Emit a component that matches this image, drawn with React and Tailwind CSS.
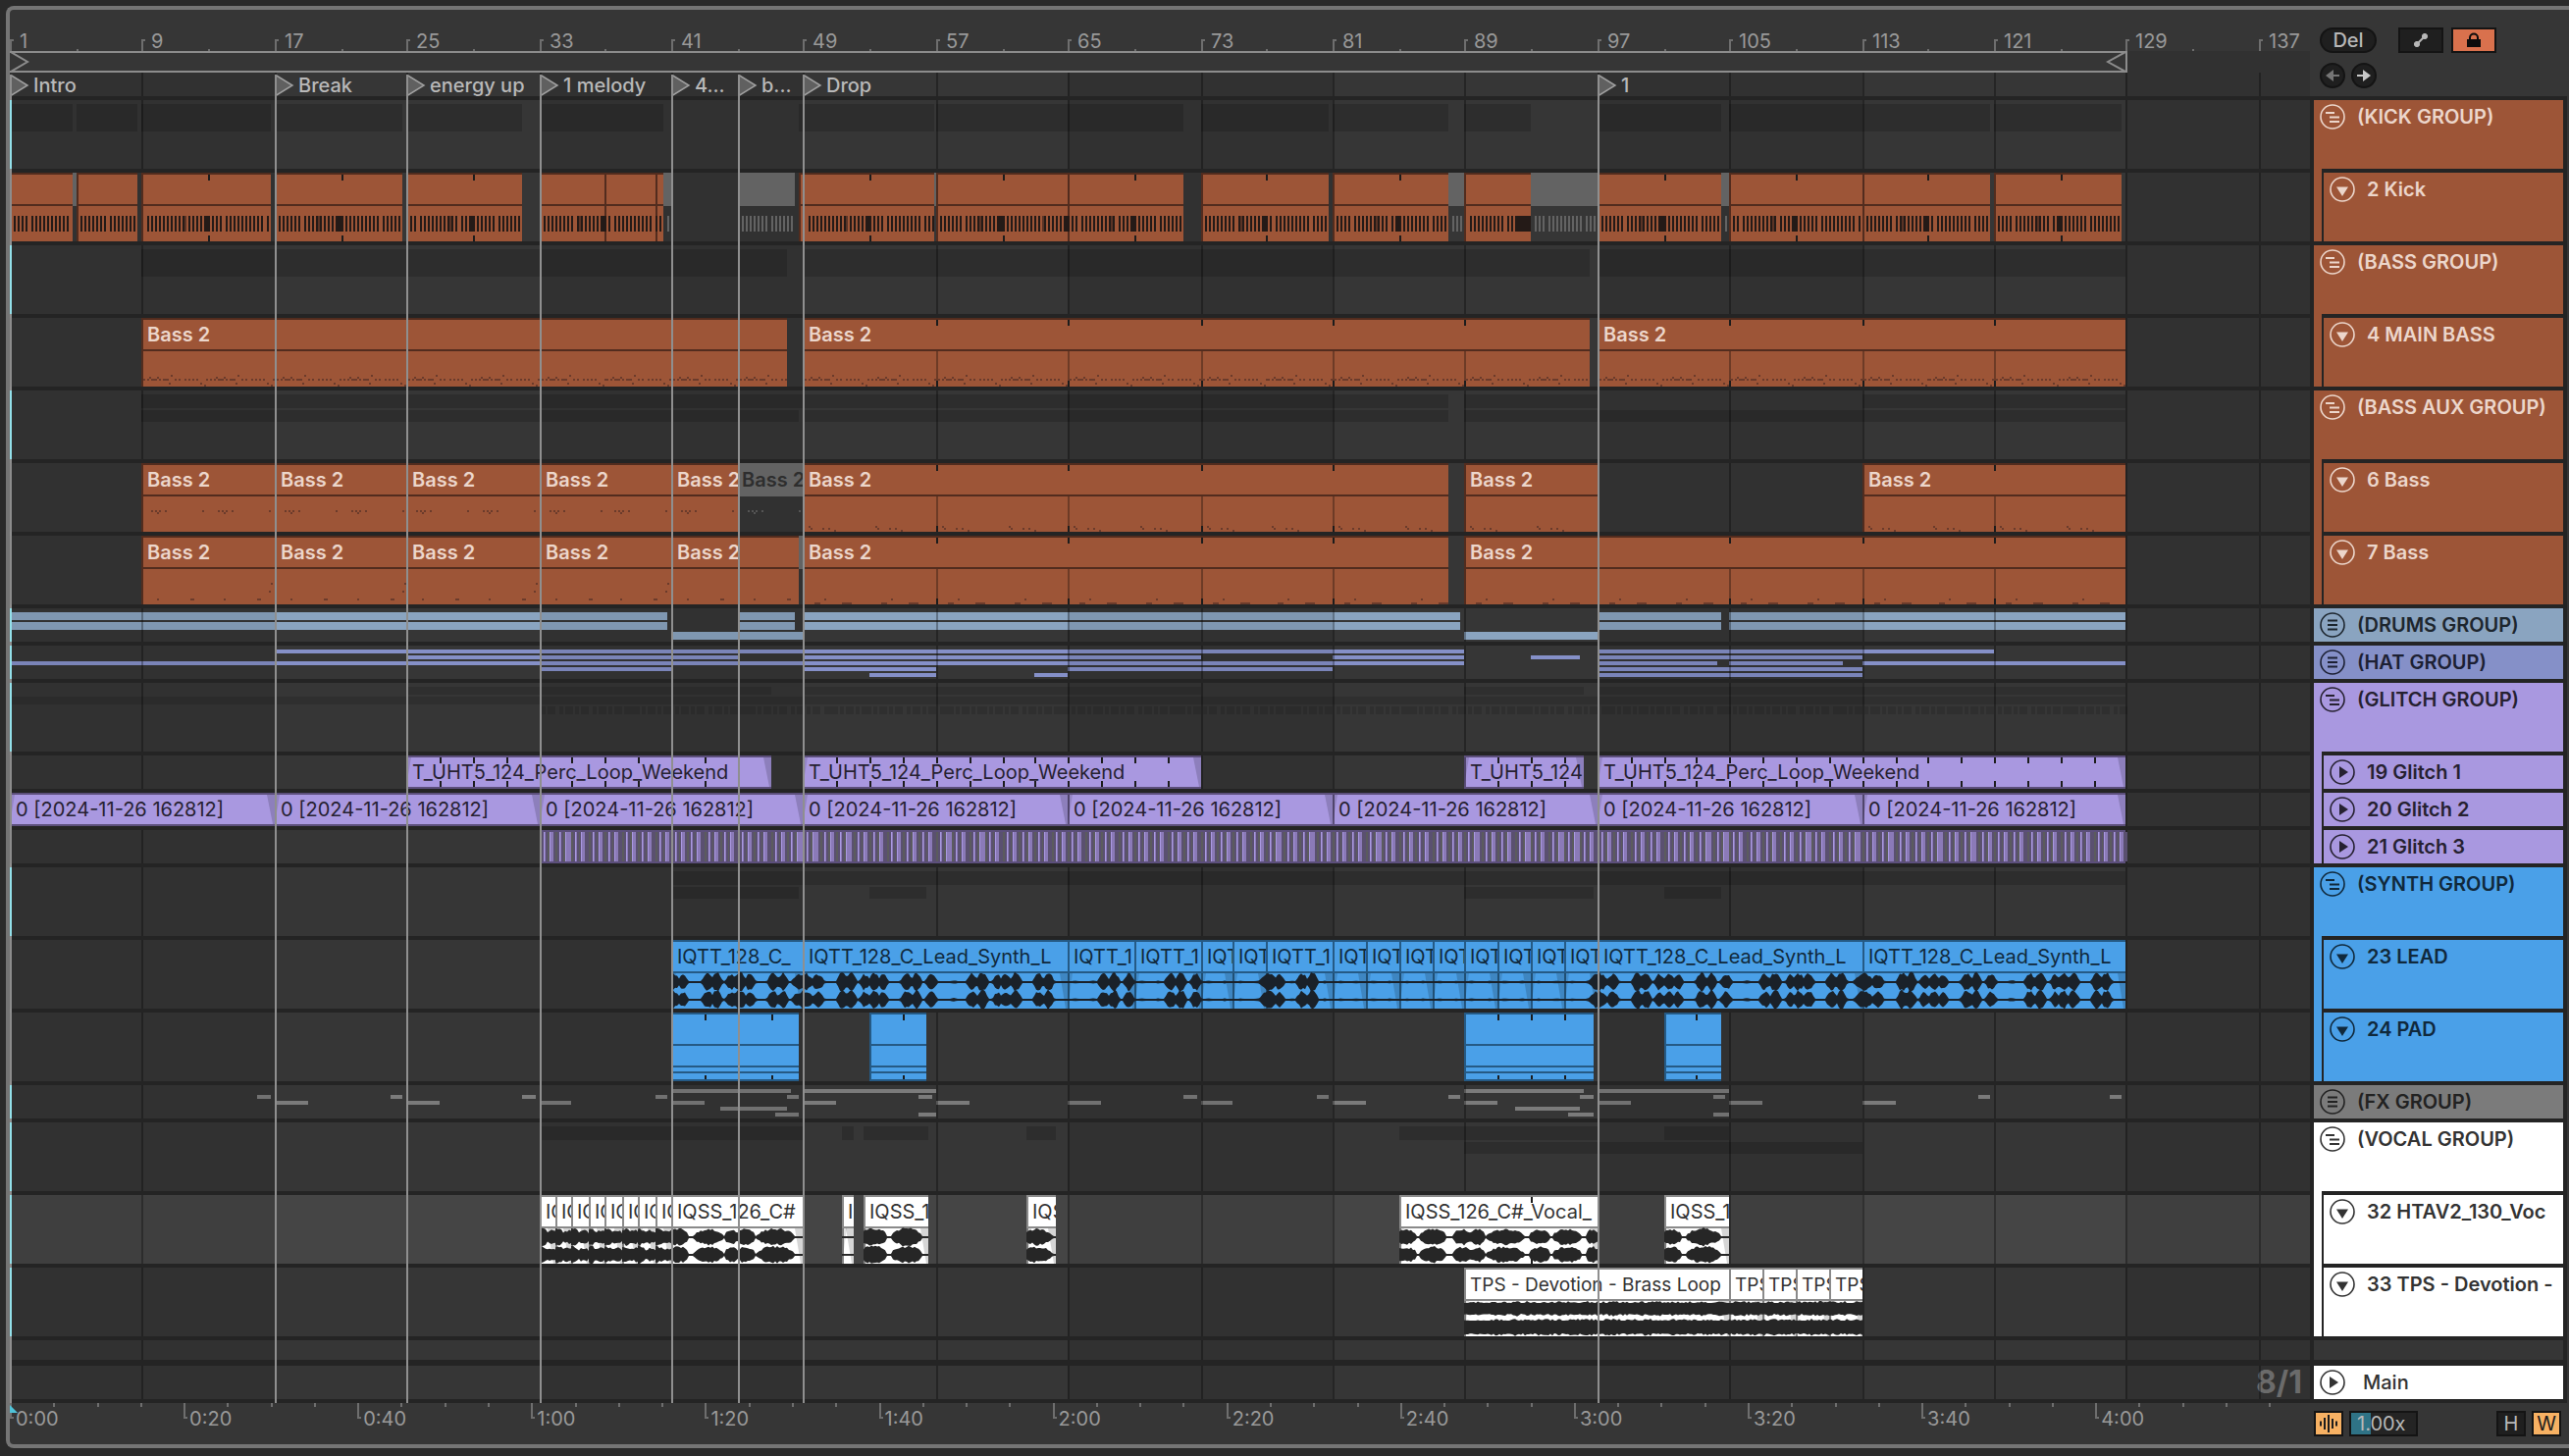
import { Fragment } from "react";

/* ---------- time axis ---------- */
const BARS = 139.1;
const VIEW = 2344;
const BAR_PX = VIEW / BARS;
const px = (bar) => 2 * Math.round(((bar - 1) * BAR_PX) / 2);
const pct = (bar) => `${(px(bar) / VIEW) * 100}%`;
const span = (a, b) => ({ left: pct(a), width: `${((px(b) - px(a)) / VIEW) * 100}%` });
const noise = (n) => {
  const v = Math.sin(n * 127.1 + 11.7) * 43758.5453;
  return v - Math.floor(v);
};
const range = (from, to, step) => {
  const out = [];
  for (let i = from; i < to; i += step) out.push(i);
  return out;
};

const LOCATORS = [
  [1, "Intro"],
  [17, "Break"],
  [25, "energy up"],
  [33, "1 melody"],
  [41, "4..."],
  [45, "b..."],
  [49, "Drop"],
  [97, "1"],
];

/* ---------- themes ---------- */
const THEME = {
  orange: { bg: "bg-[#9d5537]", line: "border-[#522c1e]", text: "text-[#ecd6cb]", title: "font-semibold" },
  steel: { bg: "bg-[#8aa4c0]", line: "border-[#4b5a69]", text: "text-[#1d262e]", title: "" },
  indigo: { bg: "bg-[#8590c8]", line: "border-[#484f6f]", text: "text-[#1c2033]", title: "" },
  purple: { bg: "bg-[#a998e0]", line: "border-[#5c4f7b]", text: "text-[#262131]", title: "" },
  blue: { bg: "bg-[#4aa0e8]", line: "border-[#255a85]", text: "text-[#10293c]", title: "" },
  gray: { bg: "bg-[#7b7b7b]", line: "border-[#444444]", text: "text-[#222222]", title: "" },
  white: { bg: "bg-white", line: "border-[#8a8a8a]", text: "text-[#333333]", title: "" },
  muted: { bg: "", line: "border-transparent", text: "text-[#2e2e2e]", title: "font-semibold" },
};

/* ---------- clip data: [start, end, label, muted] ---------- */
const KICK = [
  [1, 4.8], [4.8, 5, "", 1], [5, 8.72], [9, 16.8], [17, 24.76], [25, 32], [33, 37], [37, 40.1], [40.1, 40.55],
  [40.55, 41, "", 1], [45, 48.5, "", 1], [48.75, 56.85], [56.85, 57, "", 1], [57, 65], [65, 72], [73, 80.8],
  [81, 88], [88, 89, "", 1], [89, 93], [93, 97, "", 1], [97, 104.5], [104.5, 105, "", 1], [105, 113],
  [113, 120.8], [121, 128.76],
];
const KICK_FILLS = [13, 21, 29, 37, 53, 61, 65, 69, 77, 85, 101, 109, 117, 125];
const KICK_TICKS = [13, 21, 29, 53, 61, 69, 77, 85, 101, 109, 117, 125];
const B = "Bass 2";
const MAIN_BASS = [[9, 48, B], [49, 96.55, B], [97, 129, B]];
const BASS6 = [
  [9, 17, B], [17, 25, B], [25, 33, B], [33, 41, B], [41, 45, B], [45, 49, B, 1], [49, 88, B], [89, 97, B], [113, 129, B],
];
const BASS7 = [
  [9, 17, B], [17, 25, B], [25, 33, B], [33, 41, B], [41, 48.7, B], [48.7, 49, "", 1], [49, 88, B], [89, 129, B],
];
const PERC = "T_UHT5_124_Perc_Loop_Weekend";
const GLITCH1 = [[25, 47, PERC], [49, 73, PERC], [89, 96.2, "T_UHT5_124"], [97, 129, PERC]];
const GLITCH2 = range(1, 129, 16).map((s) => [s, s + 16, "0 [2024-11-26 162812]"]);
const SYN = "IQTT_128_C_Lead_Synth_L";
const LEAD = [
  [41, 49, "IQTT_128_C_"], [49, 65, SYN], [65, 69, "IQTT_1"], [69, 73, "IQTT_1"], [73, 75, "IQT"], [75, 77, "IQT"],
  [77, 81, "IQTT_1"], ...range(81, 97, 2).map((s) => [s, s + 2, "IQT"]), [97, 113, SYN], [113, 129, SYN],
];
const PAD = [[41, 48.7], [53, 56.4], [89, 96.8], [101, 104.5]];
const VOCAL = [
  ...range(33, 41, 1).map((s) => [s, s + 1, "IQ"]),
  [41, 49, "IQSS_126_C#"], [51.35, 52.05, "I"], [52.65, 56.6, "IQSS_1"], [62.5, 64.3, "IQS"],
  [85.05, 97, "IQSS_126_C#_Vocal_"], [101, 105, "IQSS_1"],
];
const BRASS = [[89, 105, "TPS - Devotion - Brass Loop"], ...range(105, 113, 2).map((s) => [s, s + 2, "TPS"])];

/* ---------- lane artwork ---------- */
function Art({ h, children }) {
  return (
    <svg
      className="absolute inset-0 h-full w-full"
      viewBox={`0 0 ${VIEW} ${h}`}
      preserveAspectRatio="none"
      aria-hidden="true"
    >
      {children}
    </svg>
  );
}

const boxes = (list) => list.map(([x, y, w, h]) => `M${x} ${y}h${w}v${h}h${-w}z`).join("");

function KickNotes() {
  const live = [];
  const off = [];
  KICK.forEach(([a, b, , muted]) => {
    for (let k = Math.ceil((a - 1) * 4 + 0.01); k < (b - 1) * 4 - 0.2; k++) {
      (muted ? off : live).push([2 * Math.round((k * BAR_PX) / 8), 44, 2, 16]);
    }
  });
  KICK_FILLS.forEach((f) => live.push([px(f) - 4, 44, 6, 16]));
  live.push([px(93) - 16, 44, 16, 16]);
  const soft = KICK_FILLS.map((f) => [px(f) - 26, 44, 4, 16]);
  return (
    <Art h={70}>
      <path d={boxes(off)} fill="#636363" shapeRendering="crispEdges" />
      <path d={boxes(soft)} fill="#5a3325" shapeRendering="crispEdges" />
      <path d={boxes(live)} fill="#241a17" shapeRendering="crispEdges" />
    </Art>
  );
}

/* Repeats a four-bar figure of [dx, y, w] notes inside every clip. */
function Notes({ clips, figure, w = 2 }) {
  const live = [];
  const off = [];
  clips.forEach(([a, b, , muted]) => {
    for (let s = a; s < b; s += 4) {
      figure(a, s).forEach(([dx, y, nw = w]) => {
        const x = px(s) + dx;
        if (x + nw <= px(b)) (muted ? off : live).push([x, y, nw, 2]);
      });
    }
  });
  return (
    <Art h={70}>
      <path d={boxes(off)} fill="#555555" shapeRendering="crispEdges" />
      <path d={boxes(live)} fill="#6b3b2b" shapeRendering="crispEdges" />
    </Art>
  );
}

const mainFigure = () => [
  [2, 62], [6, 62], [8, 60], [10, 62], [14, 62], [16, 60], [18, 62], [22, 62], [26, 62], [30, 58], [28, 66],
  [34, 62], [38, 62], [44, 62], [48, 62], [52, 62], [56, 62], [60, 66], [64, 68], [66, 62], [12, 62], [24, 62],
];
const bass6Figure = (a) =>
  a < 49 ? [[10, 48], [14, 48], [16, 50], [18, 48], [24, 48], [62, 48]] : [[6, 64], [8, 66], [20, 66], [26, 66], [32, 68]];
const bass7Figure = (a, s) =>
  a < 49
    ? [[16, 64], [50, 64, 4], ...((s - a) % 8 === 4 ? [[64, 48], [62, 56]] : [])]
    : [[12, 68, 6], [22, 64], [40, 68, 10]];

function wave(segments, from, to, mid, seed, floor = 1) {
  const x0 = px(from);
  const x1 = px(to);
  const top = [];
  const bottom = [];
  for (let x = x0; x <= x1; x += 2) {
    let a = floor;
    segments.forEach(([s, e, amp, tight]) => {
      if (x >= s && x <= e) {
        const t = (x - s) / Math.max(1, e - s);
        const env = Math.pow(Math.sin(Math.PI * Math.min(1, Math.max(0, t))), tight || 1);
        a = Math.max(a, amp * env * (0.7 + 0.3 * noise(x + seed)));
      }
    });
    top.push(`${x} ${(mid - a).toFixed(1)}`);
    bottom.unshift(`${x} ${(mid + a * (0.85 + 0.15 * noise(x * 3 + seed))).toFixed(1)}`);
  }
  return `M${top.join("L")}L${bottom.join("L")}Z`;
}

const FULL8 = [[-10, 13, 10], [8, 23, 9], [34, 47, 11], [43, 56, 11], [57, 69, 9], [66, 80, 10], [76, 88, 9], [99, 113, 11], [110, 122, 11], [124, 138, 9]];
const HALF8 = [[12, 24, 2], [30, 43, 10], [40, 54, 11], [57, 68, 9], [64, 78, 10], [74, 88, 11], [98, 111, 10], [108, 121, 11]];
const QUARTER = [[30, 44, 10], [41, 54, 11], [56, 69, 10]];
const LEAD_BLOBS = {
  41: [[-10, 11, 11], [6, 18, 9], [30, 45, 10], [40, 53, 11], [54, 69, 9], [62, 78, 11], [74, 87, 10], [97, 111, 10], [108, 120, 11], [122, 138, 9]],
  49: FULL8, 57: HALF8, 97: FULL8, 105: HALF8, 113: FULL8, 121: HALF8,
  65: QUARTER,
  69: QUARTER,
  77: [[-8, 13, 10], [8, 20, 9], [30, 44, 10], [41, 54, 11]],
};

function Fades({ clips, h, top, w = 8 }) {
  return clips.map(([a, b]) => (
    <Fragment key={a}>
      <path d={`M${px(b) - w} ${top}H${px(b)}V${h}h-2z`} fill="#000000" opacity="0.16" />
      <path d={`M${px(a)} ${top}h5L${px(a)} ${h}z`} fill="#000000" opacity="0.12" />
    </Fragment>
  ));
}

function LeadWave() {
  const segs = Object.entries(LEAD_BLOBS).flatMap(([bar, list]) =>
    list.map(([s, e, amp]) => [px(Number(bar)) + s, px(Number(bar)) + e, amp]),
  );
  const quiet = range(65, 97, 1).map((b) => [px(b) + 4, px(b) + 12, 2]);
  return (
    <Art h={70}>
      <Fades clips={LEAD} h={70} top={34} />
      <path d={wave(quiet, 65, 97, 43, 3)} fill="#255a85" />
      <path d={wave(quiet, 65, 97, 61, 3)} fill="#255a85" />
      <path d={wave(segs, 41, 129, 43, 1)} fill="#1a2129" />
      <path d={wave(segs, 41, 129, 61, 5)} fill="#1a2129" />
    </Art>
  );
}

const VOCAL_BLOBS = {
  41: [[-6, 18, 10, 0.4], [23, 53, 9, 0.4], [54, 68, 9, 0.4], [66, 86, 9, 0.4], [87, 126, 10, 0.5]],
  51.35: [],
  52.65: [[-4, 24, 10, 0.4], [28, 60, 10, 0.4]],
  62.5: [[-6, 27, 9, 0.5]],
  85.05: [[-4, 18, 9, 0.4], [20, 48, 9, 0.4], [54, 74, 9, 0.4], [72, 88, 9, 0.4], [88, 128, 9, 0.5], [132, 154, 9, 0.4], [156, 186, 9, 0.4], [190, 204, 9, 0.4]],
  101: [[-4, 18, 9, 0.4], [22, 58, 10, 0.5]],
};

function VocalWave() {
  return (
    <Art h={70}>
      <Fades clips={VOCAL} h={70} top={34} />
      {VOCAL.map(([a, b]) => {
        const segs = (VOCAL_BLOBS[a] || [[-6, 9, 10, 0.3], [7, 19, 8, 0.3]]).map(([s, e, amp, t]) => [px(a) + s, px(a) + e, amp, t]);
        return (
          <Fragment key={a}>
            <path d={wave(segs, a, b, 43, 2)} fill="#262626" />
            <path d={wave(segs, a, b, 61, 7)} fill="#262626" />
          </Fragment>
        );
      })}
    </Art>
  );
}

function BrassWave() {
  return (
    <Art h={70}>
      <Fades clips={BRASS} h={70} top={34} />
      {BRASS.map(([a, b]) => {
        const upper = [[px(a) - 3, px(b) + 3, 8, 0.04]];
        const lower = [[px(a) - 3, px(b) + 3, 9, 0.04]];
        return (
          <Fragment key={a}>
            <path d={wave(upper, a, b, 42, 4, 6)} fill="#262626" />
            <path d={wave(lower, a, b, 61, 9, 7)} fill="#262626" />
          </Fragment>
        );
      })}
    </Art>
  );
}

function GlitchFades({ clips }) {
  return (
    <Art h={34}>
      <Fades clips={clips} h={32} top={2} />
    </Art>
  );
}

function Slices() {
  const dark = [];
  const grayish = [];
  const mid = [];
  const light = [];
  range(33, 129, 1).forEach((b) => {
    const x = px(b);
    const r = noise(b);
    dark.push([x, 2, 18, 30]);
    grayish.push([x, 2, 2, 30]);
    grayish.push([x + 8, 2, r > 0.5 ? 2 : 1, 30]);
    mid.push([x + 4, 2, 2, 30]);
    light.push([x + 4, 2, 1, 30]);
    mid.push([x + 10, 2, r > 0.75 ? 6 : 4, 30]);
    light.push([x + 10, 2, 1, 30]);
  });
  return (
    <Art h={34}>
      <path d={boxes([[px(33), 0, px(129) - px(33), 34]])} fill="#5c4f7b" />
      <path d={boxes(dark)} fill="#5a5070" shapeRendering="crispEdges" />
      <path d={boxes(grayish)} fill="#5b5b5e" shapeRendering="crispEdges" />
      <path d={boxes(mid)} fill="#8b7ab8" shapeRendering="crispEdges" />
      <path d={boxes(light)} fill="#a998e0" shapeRendering="crispEdges" />
    </Art>
  );
}

/* ---------- overviews shown on group lanes: [y, height, [[start, end], ...]] ---------- */
const DARK = "rgba(0,0,0,0.15)";
const every8 = (from, to, len) => range(from, to, 8).map((b) => [b, b + len]);
const OVERVIEW = {
  kick: [[4, 28, [[1, 4.8], [5, 8.72], [9, 16.8], [17, 24.76], [25, 32], [33, 40.55], [48.75, 56.85], [57, 72], [73, 80.8], [81, 88], [89, 93], [97, 104.5], [105, 120.8], [121, 128.76]]]],
  bass: [[4, 28, [[9, 48], [49, 96.55], [97, 129]]]],
  aux: [[4, 14, [[9, 88], [89, 97], [113, 129]]], [20, 12, [[9, 48.7], [49, 88], [89, 129]]]],
  drums: [
    [4, 8, [[1, 40.8], [45, 48.5], [49, 88.7], [97, 104.5], [105, 129]]],
    [14, 8, [[1, 40.8], [45, 48.5], [49, 88.7], [97, 104.5], [105, 129]]],
    [24, 8, [[41, 49], [89, 97]]],
  ],
  hat: [
    [4, 4, [[17, 89], [97, 121]]],
    [10, 4, [[25, 45], [49, 73], [81, 89], [93, 96], [97, 113]]],
    [16, 4, [[1, 89], [97, 104.2], [105, 111.9], [113, 129]]],
    [22, 4, [[33, 41], [49, 57], [65, 81], [97, 113]]],
    [28, 4, [[53, 57], [63, 65], [97, 113]]],
  ],
  glitch: [
    [4, 8, [[25, 47], [49, 73], [89, 96.2], [97, 129]]],
    [14, 8, [[1, 129]]],
    [24, 8, range(33, 129, 1).flatMap((b) => [[b + 0.2, b + 0.45], [b + 0.55, b + 1.05]])],
  ],
  synth: [[4, 14, [[41, 129]]], [20, 12, [[41, 48.7], [53, 56.4], [89, 96.8], [101, 104.5]]]],
  fx: [
    [4, 4, [[41, 48.2], [49, 57], [89, 96.2], [97, 105]]],
    [10, 4, [...every8(16, 64, 0.75), ...every8(72, 112, 0.75), ...every8(120, 129, 0.75)]],
    [16, 4, every8(17, 114, 2)],
    [22, 4, [[44, 48], [92.05, 96]]],
    [28, 4, [[47.3, 48.7], [56, 57], [95.25, 96.8], [104, 105]]],
  ],
  vocal: [[4, 14, [[33, 49], [51.35, 52.05], [52.65, 56.6], [62.5, 64.3], [85.05, 97], [101, 105]]], [20, 12, [[89, 113]]]],
};

function Overview({ rows, color, h }) {
  return (
    <Art h={h}>
      {rows.map(([y, height, list]) => (
        <path
          key={y}
          d={boxes(list.map(([a, b]) => [px(a), y, px(b) - px(a), height]))}
          fill={color}
          shapeRendering="crispEdges"
        />
      ))}
    </Art>
  );
}

/* ---------- lane building blocks ---------- */
function GridShade() {
  return (
    <div className="pointer-events-none absolute inset-0 overflow-hidden">
      {range(1, 139, 32).map((b) => (
        <div key={b} className="absolute inset-y-0 bg-black/8" style={span(b, Math.min(b + 16, BARS + 1))} />
      ))}
      {range(9, 139, 8).map((b) => (
        <div key={b} className="absolute inset-y-0 w-0.5 bg-black/30" style={{ left: pct(b) }} />
      ))}
    </div>
  );
}

function Clip({ clip, theme, flat, ticks = [], bodyLines, compact }) {
  const [a, b, label, muted] = clip;
  const t = muted ? THEME.muted : THEME[theme];
  const inner = ticks.filter((x) => x > a && x < b);
  const at = (x) => ({ left: `${((px(x) - px(a)) / (px(b) - px(a))) * 100}%` });
  return (
    <div className={`absolute inset-y-0 overflow-hidden ${t.bg}`} style={span(a, b)}>
      <div
        className={`flex h-[34px] items-center overflow-hidden border-y-2 pl-1 leading-none whitespace-nowrap ${compact ? "text-[19px]" : "text-[20px]"} ${t.line} ${t.text} ${t.title} ${muted ? "bg-[#636363]" : "border-l-2"}`}
      >
        {label}
      </div>
      {!flat && !muted && <div className={`h-9 border-l-2 ${t.line}`} />}
      {inner.map((x) => (
        <Fragment key={x}>
          {bodyLines && <div className="absolute top-[34px] bottom-0 w-0.5 bg-black/30" style={at(x)} />}
          <div className="absolute top-0.5 h-1.5 w-0.5 bg-[#1c1c1c]" style={at(x)} />
          <div className={`absolute h-1.5 w-0.5 bg-[#1c1c1c] ${flat ? "bottom-0.5" : "bottom-0"}`} style={at(x)} />
        </Fragment>
      ))}
    </div>
  );
}

function Clips({ clips, ...rest }) {
  return clips.map((c) => <Clip key={c[0]} clip={c} {...rest} />);
}

function Lane({ tall, armed, lit, over, children }) {
  return (
    <div className={`relative shrink-0 overflow-hidden ${tall ? "h-[70px]" : "h-[34px]"} ${lit ? "bg-[#454545]" : "bg-[#363636]"}`}>
      {!over && <GridShade />}
      {children}
      {over && <GridShade />}
      <div className={`absolute inset-y-0 left-0 z-20 w-0.5 ${armed ? "bg-[#93e0ea]" : "bg-[#8c8c8c]"}`} />
    </div>
  );
}

const GRID8 = range(9, 129, 8);
const GROUPS = [
  {
    name: "(KICK GROUP)", theme: "orange", lane: <Overview rows={OVERVIEW.kick} color={DARK} h={70} />,
    tracks: [{ name: "2 Kick", lane: <><Clips clips={KICK} theme="orange" ticks={KICK_TICKS} /><KickNotes /></> }],
  },
  {
    name: "(BASS GROUP)", theme: "orange", lane: <Overview rows={OVERVIEW.bass} color={DARK} h={70} />,
    tracks: [{ name: "4 MAIN BASS", lane: <><Clips clips={MAIN_BASS} theme="orange" ticks={GRID8} bodyLines /><Notes clips={MAIN_BASS} figure={mainFigure} /></> }],
  },
  {
    name: "(BASS AUX GROUP)", theme: "orange", lane: <Overview rows={OVERVIEW.aux} color={DARK} h={70} />,
    tracks: [
      { name: "6 Bass", lane: <><Clips clips={BASS6} theme="orange" ticks={GRID8} bodyLines /><Notes clips={BASS6} figure={bass6Figure} /></> },
      { name: "7 Bass", lane: <><Clips clips={BASS7} theme="orange" ticks={GRID8} bodyLines /><Notes clips={BASS7} figure={bass7Figure} /></> },
    ],
  },
  { name: "(DRUMS GROUP)", theme: "steel", folded: true, lane: <Overview rows={OVERVIEW.drums} color="#8aa4c0" h={34} />, tracks: [] },
  { name: "(HAT GROUP)", theme: "indigo", folded: true, lane: <Overview rows={OVERVIEW.hat} color="#8590c8" h={34} />, tracks: [] },
  {
    name: "(GLITCH GROUP)", theme: "purple", lane: <Overview rows={OVERVIEW.glitch} color="rgba(0,0,0,0.12)" h={70} />,
    tracks: [
      { name: "19 Glitch 1", small: true, lane: <><Clips clips={GLITCH1} theme="purple" flat ticks={range(27, 129, 2)} /><GlitchFades clips={GLITCH1} /></> },
      { name: "20 Glitch 2", small: true, lane: <><Clips clips={GLITCH2} theme="purple" flat /><GlitchFades clips={GLITCH2} /></> },
      { name: "21 Glitch 3", small: true, lane: <Slices /> },
    ],
  },
  {
    name: "(SYNTH GROUP)", theme: "blue", lane: <Overview rows={OVERVIEW.synth} color={DARK} h={70} />,
    tracks: [
      { name: "23 LEAD", lane: <><Clips clips={LEAD} theme="blue" /><LeadWave /></> },
      {
        name: "24 PAD",
        lane: (
          <>
            <Clips clips={PAD} theme="blue" ticks={[43, 45, 47, 55, 91, 93, 95, 103]} />
            <Art h={70}>
              {[54, 60, 68].map((y) => (
                <path key={y} d={boxes(PAD.map(([a, b]) => [px(a), y, px(b) - px(a), 2]))} fill="#255a85" shapeRendering="crispEdges" />
              ))}
            </Art>
          </>
        ),
      },
    ],
  },
  { name: "(FX GROUP)", theme: "gray", folded: true, lane: <Overview rows={OVERVIEW.fx} color="#7b7b7b" h={34} />, tracks: [] },
  {
    name: "(VOCAL GROUP)", theme: "white", lane: <Overview rows={OVERVIEW.vocal} color={DARK} h={70} />,
    tracks: [
      { name: "32 HTAV2_130_Voc", lit: true, armed: true, lane: <><Clips clips={VOCAL} theme="white" ticks={[93]} /><VocalWave /></> },
      { name: "33 TPS - Devotion -", armed: true, lane: <><Clips clips={BRASS} theme="white" compact /><BrassWave /></> },
    ],
  },
];

/* ---------- rulers ---------- */
function BeatRuler() {
  return (
    <div className="relative h-[42px] text-[20px] leading-none text-[#999999]">
      {range(1, 139, 4).map((b) =>
        b % 8 === 1 ? (
          <div key={b} className="absolute bottom-0 flex h-5 items-center" style={{ left: pct(b) }}>
            <div className="mt-2 h-3 w-1 border-t-2 border-l-2 border-[#6e6e6e]" />
            <span className="pl-1.5">{b}</span>
          </div>
        ) : (
          <div key={b} className="absolute bottom-0 h-0.5 w-0.5 bg-[#6e6e6e]" style={{ left: pct(b) }} />
        ),
      )}
    </div>
  );
}

function LoopBrace() {
  return (
    <div className="relative h-[22px]">
      <div className="absolute inset-y-0 right-0 bg-black/8" style={{ left: pct(129) }} />
      <div className="absolute inset-y-0 flex justify-between border-y-2 border-r-2 border-[#8c8c8c]" style={span(1, 129.1)}>
        <svg className="h-[18px] w-5" viewBox="0 0 20 18" fill="none" stroke="#8c8c8c" strokeWidth="2" aria-hidden="true">
          <path d="M1 -1L18 9L1 19" />
        </svg>
        <svg className="h-[18px] w-5" viewBox="0 0 20 18" fill="none" stroke="#8c8c8c" strokeWidth="2" aria-hidden="true">
          <path d="M20 -1L2 9L20 19" />
        </svg>
      </div>
    </div>
  );
}

function LocatorRow() {
  return (
    <div className="relative h-6">
      <GridShade />
      {LOCATORS.map(([bar, name]) => (
        <button key={bar} type="button" className="absolute top-0.5 flex h-[22px] items-center gap-1 text-[20px] leading-none font-medium whitespace-nowrap text-[#b9b9b9]" style={{ left: pct(bar) }}>
          <svg className="h-[22px] w-5" viewBox="0 0 20 22" fill="#606060" stroke="#a0a0a0" strokeWidth="1.5" aria-hidden="true">
            <path d="M1 0.5L18 11L1 21.5Z" />
          </svg>
          {name}
        </button>
      ))}
    </div>
  );
}

const SECONDS = BARS * 1.903;
const clock = (s) => `${Math.floor(s / 60)}:${String(s % 60).padStart(2, "0")}`;
function TimeRuler() {
  return (
    <div className="relative h-[42px] overflow-hidden text-[20px] leading-none text-[#999999]">
      {range(0, SECONDS, 5).map((s) => {
        const left = { left: `${(s / SECONDS) * 100}%` };
        return s % 20 === 0 && s < 260 ? (
          <div key={s} className="absolute top-0 flex" style={left}>
            <div className="h-4 w-1 border-b-2 border-l-2 border-[#6e6e6e]" />
            <span className="pt-1.5 pl-0.5">{clock(s)}</span>
          </div>
        ) : (
          <div key={s} className="absolute top-0 h-1 w-0.5 bg-[#6e6e6e]" style={left} />
        );
      })}
      <svg className="absolute top-0.5 left-0 h-2 w-2" viewBox="0 0 8 8" aria-hidden="true">
        <path d="M0 0L8 8H0Z" fill="#4fc3d9" />
      </svg>
    </div>
  );
}

/* ---------- track headers ---------- */
const ICONS = {
  group: <path d="M6 9H15M10 13.5H20M10 18H20" />,
  folded: <path d="M8 8.5H18M8 13H18M8 17.5H18" />,
  down: <path d="M7 10.5H19L13 20Z" fill="currentColor" stroke="none" />,
  right: <path d="M10 7V19L19 13Z" fill="currentColor" stroke="none" />,
};

function TrackName({ icon, name, wide }) {
  return (
    <div className={`flex items-center pt-1 pl-1.5 text-[20px] leading-none whitespace-nowrap ${wide ? "gap-[18px] font-medium" : "gap-3 font-semibold"}`}>
      <button type="button" aria-label={`Fold ${name}`} className="size-[26px] shrink-0">
        <svg viewBox="0 0 26 26" className="size-[26px]" fill="none" stroke="currentColor" strokeWidth="2">
          <circle cx="13" cy="13" r="12" strokeWidth="1.6" />
          {ICONS[icon]}
        </svg>
      </button>
      <span>{name}</span>
    </div>
  );
}

function GroupHeader({ group }) {
  const t = THEME[group.theme];
  return (
    <section className={`overflow-hidden ${t.bg} ${t.text}`}>
      <div className={group.folded ? "h-[34px]" : "h-[70px]"}>
        <TrackName icon={group.folded ? "folded" : "group"} name={group.name} />
      </div>
      {group.tracks.map((track) => (
        <div key={track.name} className="ml-2 border-t-4 border-l-2 border-[#242424]">
          <div className={`overflow-hidden ${track.small ? "h-[34px]" : "h-[70px]"}`}>
            <TrackName icon={track.small ? "right" : "down"} name={track.name} />
          </div>
        </div>
      ))}
    </section>
  );
}

const PILL = "flex h-[26px] items-center justify-center border-2 border-[#141414] text-[20px] leading-none";

function TopControls() {
  return (
    <div className="flex h-[88px] flex-col gap-2.5 pt-[18px] pl-2.5">
      <div className="flex items-center gap-2">
        <button type="button" className={`${PILL} mr-3.5 w-[58px] rounded-full bg-[#1f1f1f] font-medium text-[#b8b8b8]`}>Del</button>
        <button type="button" aria-label="Automation mode" className={`${PILL} w-[46px] bg-[#1f1f1f]`}>
          <svg className="size-4" viewBox="0 0 16 16" fill="#b8b8b8" stroke="#b8b8b8" aria-hidden="true">
            <path d="M4 12L12 4" strokeWidth="2" />
            <circle cx="4" cy="12" r="2.6" />
            <circle cx="12" cy="4" r="2.6" />
          </svg>
        </button>
        <button type="button" aria-label="Lock envelopes" className={`${PILL} w-[46px] bg-[#d9714d]`}>
          <svg className="h-4 w-4" viewBox="0 0 16 16" aria-hidden="true">
            <path d="M1 7H15V15H1Z" fill="#0c0c0c" />
            <path d="M4 8V5.5A4 4 0 0 1 12 5.5V8" fill="none" stroke="#0c0c0c" strokeWidth="2" />
          </svg>
        </button>
      </div>
      <div className="flex gap-1.5">
        <button type="button" aria-label="Previous locator" className={`${PILL} w-[26px] rounded-full bg-[#1f1f1f] text-[#757575]`}>
          <svg className="h-3.5 w-3.5 shrink-0" viewBox="0 0 14 14" fill="currentColor" aria-hidden="true"><path d="M0 7L8 1V6H14V8H8V13Z" /></svg>
        </button>
        <button type="button" aria-label="Next locator" className={`${PILL} w-[26px] rounded-full bg-[#1f1f1f] text-[#c9c9c9]`}>
          <svg className="h-3.5 w-3.5 shrink-0" viewBox="0 0 14 14" fill="currentColor" aria-hidden="true"><path d="M14 7L6 1V6H0V8H6V13Z" /></svg>
        </button>
      </div>
    </div>
  );
}

function BottomControls() {
  return (
    <div className="flex h-[42px] items-start gap-1.5 pt-2 pr-2 pl-1">
      <button type="button" aria-label="Show waveforms" className={`${PILL} w-[30px] bg-[#f7b163]`}>
        <svg className="h-[18px] w-5 shrink-0" viewBox="0 0 20 18" stroke="#1c1c1c" strokeWidth="2" aria-hidden="true">
          <path d="M2 6.5V11.5M6 3V15M10 0V18M14 4V14M18 6.5V11.5" />
        </svg>
      </button>
      <input
        type="text"
        aria-label="Zoom factor"
        defaultValue="1.00x"
        className="h-[26px] w-[70px] border-2 border-[#141414] bg-linear-to-r from-[#2f7386] from-30% to-[#242424] to-30% pl-1.5 text-[20px] leading-none text-[#b8b8b8]"
      />
      <button type="button" className={`${PILL} ml-auto w-[30px] bg-[#1f1f1f] text-[#b8b8b8]`}>H</button>
      <button type="button" className={`${PILL} w-[30px] bg-[#f7b163] text-[#1c1c1c]`}>W</button>
    </div>
  );
}

export default function App() {
  return (
    <div className="min-h-screen bg-[#2a2a2a] pt-1.5 pb-2 pl-1.5 font-['Inter',sans-serif]">
      <main className="flex overflow-hidden rounded-l-lg border-y-4 border-l-4 border-[#757575] bg-[#363636]">
        <div className="relative min-w-0 flex-1">
          <BeatRuler />
          <LoopBrace />
          <LocatorRow />
          <div className="flex flex-col gap-1 bg-[#242424] py-1">
            {GROUPS.map((g) => (
              <Fragment key={g.name}>
                <Lane tall={!g.folded} armed over>{g.lane}</Lane>
                {g.tracks.map((t) => (
                  <Lane key={t.name} tall={!t.small} lit={t.lit} armed={t.armed}>{t.lane}</Lane>
                ))}
              </Fragment>
            ))}
            <div className="relative mb-0.5 h-5 bg-[#363636]"><GridShade /></div>
            <div className="relative flex h-[34px] items-center justify-end bg-[#363636] pr-2 text-[32px] leading-none font-bold text-[#757575]">
              <GridShade />
              8/1
            </div>
          </div>
          <TimeRuler />
          {LOCATORS.map(([bar]) => (
            <div key={bar} className="pointer-events-none absolute top-[66px] bottom-[42px] z-10 w-0.5 bg-[#8f8f8f]" style={{ left: pct(bar) }} />
          ))}
        </div>
        <aside className="w-[264px] shrink-0">
          <TopControls />
          <div className="flex flex-col gap-1 border-r-2 border-[#353535] bg-[#242424] p-1">
            {GROUPS.map((g) => <GroupHeader key={g.name} group={g} />)}
            <div className="mb-0.5 h-5 bg-[#363636]" />
            <div className="h-[34px] bg-white text-[#333333]"><TrackName icon="right" name="Main" wide /></div>
          </div>
          <BottomControls />
        </aside>
      </main>
    </div>
  );
}
